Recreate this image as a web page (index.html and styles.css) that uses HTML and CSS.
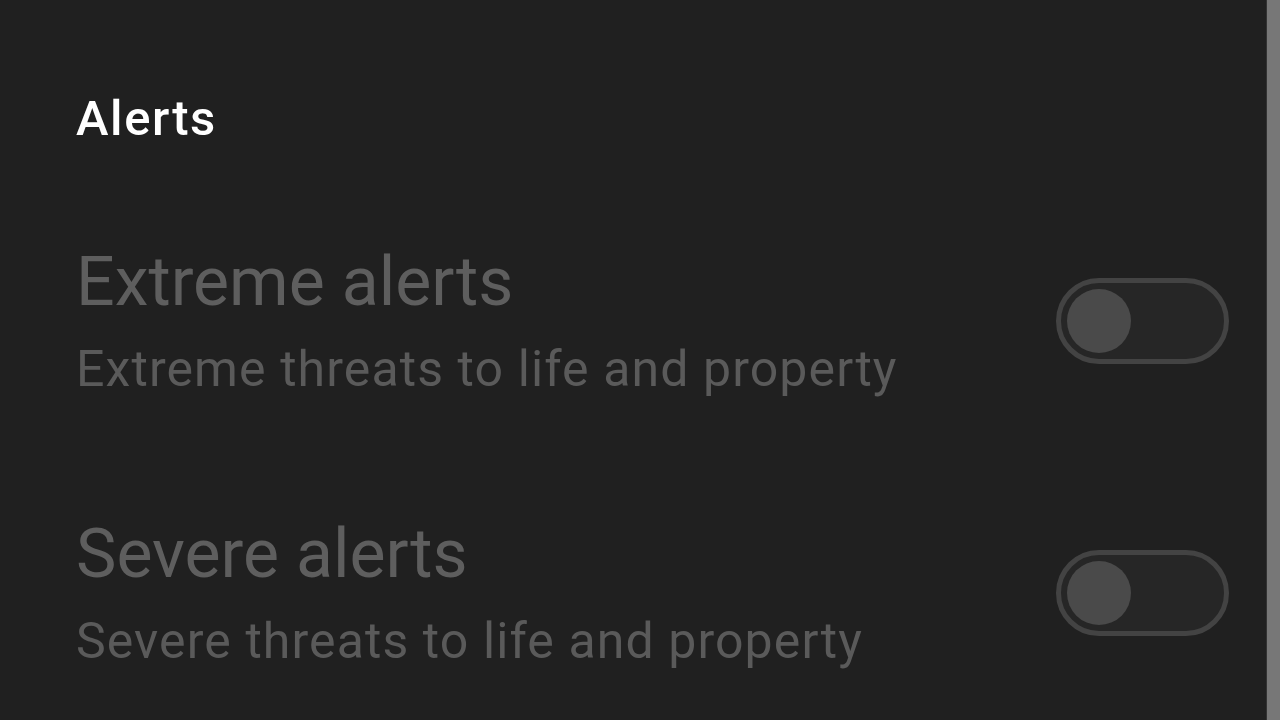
FILE: index.html
```html
<!DOCTYPE html>
<html lang="en">

<head>
    <meta charset="UTF-8">
    <meta name="viewport" content="width=device-width, initial-scale=1.0">
    <title>Alerts</title>
    <link rel="stylesheet" href="styles.css">
</head>

<body>
    <div class="screen">
        <main class="settings">
            <h1 class="section-title">Alerts</h1>

            <div class="setting-row">
                <div class="setting-text">
                    <div class="setting-title">Extreme alerts</div>
                    <div class="setting-summary">Extreme threats to life and property</div>
                </div>
                <div class="switch"><span class="knob"></span></div>
            </div>

            <div class="setting-row">
                <div class="setting-text">
                    <div class="setting-title">Severe alerts</div>
                    <div class="setting-summary">Severe threats to life and property</div>
                </div>
                <div class="switch"><span class="knob"></span></div>
            </div>
        </main>
        <div class="scrollbar"></div>
    </div>
</body>

</html>
```

FILE: styles.css
```css
* {
    margin: 0;
    padding: 0;
    box-sizing: border-box;
}

body {
    font-family: Roboto, "Open Sans", sans-serif;
    background-color: #202020;
    height: 100vh;
    overflow: hidden;
}

.screen {
    display: flex;
    height: 100%;
}

.settings {
    flex: 1;
    padding: 91px 37px 0 76px;
    display: flex;
    flex-direction: column;
    gap: 115px;
}

.section-title {
    font-size: 49px;
    font-weight: 500;
    letter-spacing: 1.6px;
    color: #fff;
    line-height: 56px;
    margin-bottom: -20px;
}

.setting-row {
    display: flex;
    align-items: center;
    justify-content: space-between;
}

.setting-title {
    font-size: 68px;
    color: #5e5e5e;
    line-height: 80px;
}

.setting-summary {
    font-size: 50px;
    letter-spacing: 1.1px;
    color: #5a5a5a;
    line-height: 60px;
    margin-top: 17px;
}

/* interruptor desligado */
.switch {
    width: 173px;
    height: 86px;
    border: 5px solid #434343;
    border-radius: 43px;
    background-color: #262626;
    display: flex;
    align-items: center;
    padding-left: 6px;
}

.knob {
    width: 64px;
    height: 64px;
    border-radius: 50%;
    background-color: #4a4a4a;
}

.scrollbar {
    width: 14px;
    background-color: #777;
    border-left: 1px solid #333;
}
```
